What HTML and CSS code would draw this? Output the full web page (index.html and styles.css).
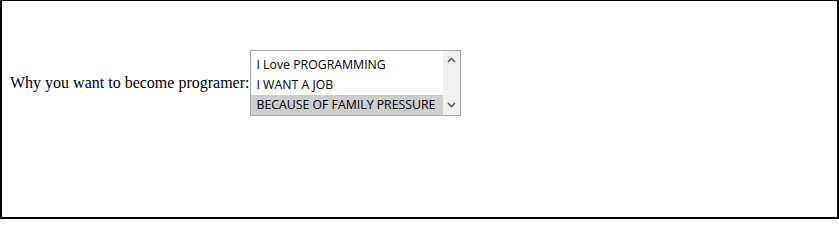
FILE: index.html
```html
<!DOCTYPE html>
<html>
<head>
<meta charset="utf-8">
<link rel="stylesheet" href="styles.css">
</head>
<body>
<div class="frame">
  <div class="row">
    <label class="label" for="reason">Why you want to become programer:</label>
    <div class="listbox" id="reason" role="listbox">
      <div class="options">
        <div class="option" role="option">I Love PROGRAMMING</div>
        <div class="option" role="option">I WANT A JOB</div>
        <div class="option selected" role="option" aria-selected="true">BECAUSE OF FAMILY PRESSURE</div>
      </div>
      <div class="scrollbar">
        <svg class="arrow" width="9" height="6" viewBox="0 0 9 6"><path d="M1 5 L4.5 1.5 L8 5" fill="none" stroke="#606060" stroke-width="1.6"/></svg>
        <svg class="arrow" width="9" height="6" viewBox="0 0 9 6"><path d="M1 1 L4.5 4.5 L8 1" fill="none" stroke="#606060" stroke-width="1.6"/></svg>
      </div>
    </div>
  </div>
</div>
</body>
</html>
```

FILE: styles.css
```css
html, body {
  margin: 0;
  padding: 0;
  background: #fff;
}
.frame {
  box-sizing: border-box;
  width: 839px;
  height: 219px;
  border-style: solid;
  border-color: #000;
  border-width: 1px 2px 2px 2px;
  padding: 49px 0 0 8px;
}
.row {
  display: flex;
  align-items: center;
}
.label {
  font-family: "Liberation Serif", serif;
  font-size: 16px;
  color: #000;
  margin-right: 1px;
}
.listbox {
  box-sizing: border-box;
  width: 211px;
  height: 66px;
  border: 1px solid #a9a9a9;
  display: flex;
  background: #fff;
}
.options {
  flex: 1;
  display: flex;
  flex-direction: column;
  justify-content: flex-end;
}
.option {
  height: 20px;
  line-height: 19px;
  padding-left: 5px;
  font-family: "Open Sans", "Noto Sans", sans-serif;
  font-size: 12.3px;
  color: #000;
  white-space: nowrap;
}
.option.selected {
  background: #cecece;
}
.scrollbar {
  width: 17px;
  background: #f0f0f0;
  display: flex;
  flex-direction: column;
  justify-content: space-between;
  align-items: center;
  padding: 6px 0 7px;
}
.arrow {
  display: block;
}
```
